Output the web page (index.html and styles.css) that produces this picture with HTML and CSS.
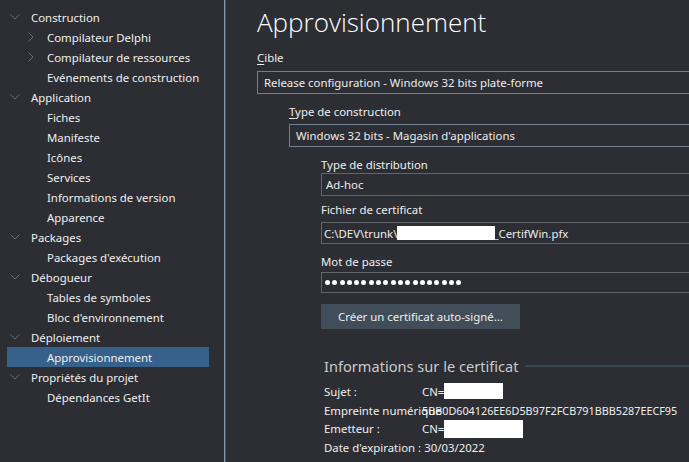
FILE: index.html
```html
<!DOCTYPE html>
<html lang="fr">
<head>
<meta charset="utf-8">
<title>Approvisionnement</title>
<link rel="stylesheet" href="styles.css">
</head>
<body>
<div class="app">
  <nav class="tree">
    <div class="row l0"><span class="tw"><svg width="10" height="6" viewBox="0 0 10 6"><polyline points="0.5,0.5 5,5 9.5,0.5"/></svg></span>Construction</div>
    <div class="row l1"><span class="tw"><svg width="6" height="10" viewBox="0 0 6 10"><polyline points="0.5,0.5 5,5 0.5,9.5"/></svg></span>Compilateur Delphi</div>
    <div class="row l1"><span class="tw"><svg width="6" height="10" viewBox="0 0 6 10"><polyline points="0.5,0.5 5,5 0.5,9.5"/></svg></span>Compilateur de ressources</div>
    <div class="row l1"><span class="tw"></span>Evénements de construction</div>
    <div class="row l0"><span class="tw"><svg width="10" height="6" viewBox="0 0 10 6"><polyline points="0.5,0.5 5,5 9.5,0.5"/></svg></span>Application</div>
    <div class="row l1"><span class="tw"></span>Fiches</div>
    <div class="row l1"><span class="tw"></span>Manifeste</div>
    <div class="row l1"><span class="tw"></span>Icônes</div>
    <div class="row l1"><span class="tw"></span>Services</div>
    <div class="row l1"><span class="tw"></span>Informations de version</div>
    <div class="row l1"><span class="tw"></span>Apparence</div>
    <div class="row l0"><span class="tw"><svg width="10" height="6" viewBox="0 0 10 6"><polyline points="0.5,0.5 5,5 9.5,0.5"/></svg></span>Packages</div>
    <div class="row l1"><span class="tw"></span>Packages d'exécution</div>
    <div class="row l0"><span class="tw"><svg width="10" height="6" viewBox="0 0 10 6"><polyline points="0.5,0.5 5,5 9.5,0.5"/></svg></span>Débogueur</div>
    <div class="row l1"><span class="tw"></span>Tables de symboles</div>
    <div class="row l1"><span class="tw"></span>Bloc d'environnement</div>
    <div class="row l0"><span class="tw"><svg width="10" height="6" viewBox="0 0 10 6"><polyline points="0.5,0.5 5,5 9.5,0.5"/></svg></span>Déploiement</div>
    <div class="row l1 selected"><span class="tw"></span>Approvisionnement</div>
    <div class="row l0"><span class="tw"><svg width="10" height="6" viewBox="0 0 10 6"><polyline points="0.5,0.5 5,5 9.5,0.5"/></svg></span>Propriétés du projet</div>
    <div class="row l1"><span class="tw"></span>Dépendances GetIt</div>
  </nav>
  <div class="splitter"></div>
  <main class="content">
    <h1 class="title">Approvisionnement</h1>

    <div class="label lbl-cible"><u>C</u>ible</div>
    <div class="box box-blue">Release configuration - Windows 32 bits plate-forme</div>

    <div class="indent1">
      <div class="label lbl-type"><u>T</u>ype de construction</div>
      <div class="box box-blue">Windows 32 bits - Magasin d'applications</div>

      <div class="indent2">
        <div class="label lbl-dist">Type de distribution</div>
        <div class="box box-grey box-dist">Ad-hoc</div>

        <div class="label lbl-cert">Fichier de certificat</div>
        <div class="box box-grey box-cert">C:\DEV\trunk\<span class="redact r-file"></span><span class="after-redact">_CertifWin.pfx</span></div>

        <div class="label lbl-pass">Mot de passe</div>
        <div class="box box-grey box-pass">
          <span class="dots"><i></i><i></i><i></i><i></i><i></i><i></i><i></i><i></i><i></i><i></i><i></i><i></i><i></i><i></i><i></i><i></i><i></i><i></i><i></i></span>
        </div>

        <button class="btn">Créer un certificat auto-signé...</button>

        <div class="group-head"><span class="group-title">Informations sur le certificat</span><span class="group-line"></span></div>
        <div class="info">
          <div class="info-row"><span class="k">Sujet :</span><span class="v">CN=<span class="redact r-subj"></span></span></div>
          <div class="info-row"><span class="k">Empreinte numérique</span><span class="v v-hash">5BB0D604126EE6D5B97F2FCB791BBB5287EECF95</span></div>
          <div class="info-row"><span class="k">Emetteur :</span><span class="v">CN=<span class="redact r-iss"></span></span></div>
          <div class="info-row"><span class="k k-date">Date d'expiration :</span><span class="v v-date">30/03/2022</span></div>
        </div>
      </div>
    </div>
  </main>
</div>
</body>
</html>
```

FILE: styles.css
```css
html, body {
  margin: 0;
  padding: 0;
  background: #2c2e33;
  overflow: hidden;
}
body {
  width: 689px;
  height: 462px;
  font-family: "Noto Sans", "Open Sans", sans-serif;
  font-size: 11.4px;
  color: #ececec;
}
.app {
  display: flex;
  height: 462px;
}
.tree {
  width: 217px;
  flex: none;
  padding: 7px 0 0 7px;
}
.row {
  width: 202px;
  height: 20px;
  display: flex;
  align-items: center;
  white-space: nowrap;
  color: #f0f0f0;
}
.row.l0 { padding-left: 3px; }
.row.l0 .tw { width: 21px; }
.row.l1 { padding-left: 21px; }
.row.l1 .tw { width: 19px; }
.tw {
  flex: none;
  display: flex;
  align-items: center;
  height: 20px;
}
.tw svg { display: block; }
.tw polyline {
  fill: none;
  stroke: #6a6d73;
  stroke-width: 1;
}
.row.selected {
  background: #36618b;
  box-sizing: border-box;
}
.splitter {
  flex: none;
  width: 1px;
  border-left: 1px solid #7d98b4;
  background: #46525e;
}
.content {
  flex: 1;
  min-width: 0;
  overflow: hidden;
  padding-left: 31px;
}
.title {
  margin: 5px 0 0 0;
  font-family: "Open Sans", "Noto Sans", sans-serif;
  font-weight: 300;
  font-size: 26px;
  line-height: 34px;
  color: #ffffff;
  white-space: nowrap;
}
.label {
  line-height: 16px;
  white-space: nowrap;
  color: #efefef;
}
.label u { text-decoration-thickness: 1px; text-underline-offset: 2px; }
.lbl-cible { margin-top: 11px; }
.lbl-type { margin-top: 10px; }
.lbl-dist { margin-top: 10px; }
.lbl-cert { margin-top: 6px; }
.lbl-pass { margin-top: 10px; }
.box {
  box-sizing: border-box;
  width: 600px;
  height: 23px;
  line-height: 21px;
  padding-left: 6px;
  white-space: nowrap;
  display: flex;
  align-items: center;
}
.box-blue {
  border: 1px solid #6e8092;
  margin-top: 5px;
}
.indent1 .box-blue { margin-top: 4px; }
.indent1 { padding-left: 32px; }
.indent2 { padding-left: 32px; }
.box-grey {
  border: 1px solid #62666c;
  padding-left: 4px;
}
.box-dist { margin-top: 0; }
.box-cert { margin-top: 4px; height: 22px; padding-left: 2px; }
.box-pass { margin-top: 2px; height: 21px; padding-left: 3px; }
.redact {
  display: inline-block;
  background: #ffffff;
}
.r-file { width: 98px; height: 14px; }
.after-redact { margin-left: -2px; }
.dots {
  display: flex;
  gap: 2.3px;
  align-items: center;
}
.dots i {
  display: block;
  width: 5px;
  height: 5px;
  border-radius: 50%;
  background: #ffffff;
}
.btn {
  display: block;
  margin-top: 11px;
  width: 199px;
  height: 25px;
  border: none;
  background: #414e5a;
  color: #eeeeee;
  font-family: "Noto Sans", "Open Sans", sans-serif;
  font-size: 11.4px;
  padding: 0;
}
.group-head {
  margin-top: 27px;
  padding-left: 3px;
  display: flex;
  align-items: center;
  height: 20px;
}
.group-title {
  font-size: 14.6px;
  line-height: 20px;
  color: #c9cbce;
  white-space: nowrap;
}
.group-line {
  flex: 1;
  margin-left: 6px;
  height: 2px;
  background: #3b4751;
  min-width: 300px;
}
.info {
  margin-top: 6px;
  padding-left: 3px;
}
.info-row {
  display: flex;
  height: 18.7px;
  align-items: center;
  white-space: nowrap;
  color: #eeeeee;
  overflow: visible;
}
.k {
  width: 98px;
  flex: none;
}
.v {
  display: flex;
  align-items: center;
  height: 18px;
}
.v-hash { font-size: 10.8px; }
.k-date { width: auto; margin-right: 3px; }
.r-subj { width: 59px; height: 16px; }
.r-iss { width: 79px; height: 18px; }
```
